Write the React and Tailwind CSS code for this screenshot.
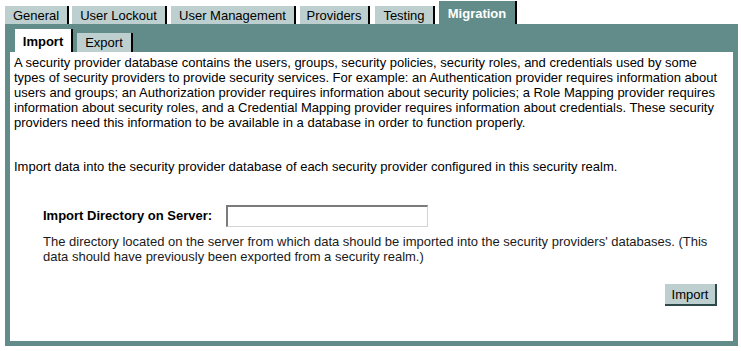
export default function App() {
  const tabs = [
    { label: "General", w: "w-[64px]", ml: "ml-[5px]" },
    { label: "User Lockout", w: "w-[95px]", ml: "ml-[3px]" },
    { label: "User Management", w: "w-[125px]", ml: "ml-[4px]" },
    { label: "Providers", w: "w-[70px]", ml: "ml-[4px]" },
    { label: "Testing", w: "w-[60px]", ml: "ml-[5px]" },
  ];
  return (
    <div className="w-[741px] h-[351px] bg-white text-black font-['Liberation_Sans',Arial,sans-serif] text-[13px] overflow-hidden">
      <div className="flex items-end h-[24px]">
        {tabs.map((t) => (
          <div
            key={t.label}
            className={`${t.w} ${t.ml} h-[18px] bg-[#bdd0cf] border-r-2 border-black flex items-center justify-center leading-none`}
          >
            {t.label}
          </div>
        ))}
        <div className="w-[78px] ml-[4px] h-[23px] bg-[#628c89] border-r-2 border-black flex items-center justify-center text-white font-bold leading-none pt-[1px]">
          Migration
        </div>
      </div>
      <div className="ml-[5px] w-[733px] h-[322px] bg-[#628c89] flex flex-col px-[5px] pb-[5px]">
        <div className="flex items-end h-[28px] pl-[5px]">
          <div className="w-[58px] h-[23px] bg-white border-r-2 border-black flex items-center justify-center font-bold leading-none pt-[1px]">
            Import
          </div>
          <div className="w-[56px] ml-[4px] h-[19px] bg-[#bdd0cf] border-r-2 border-black flex items-center justify-center leading-none">
            Export
          </div>
        </div>
        <div className="flex-1 bg-white pl-[4px] pr-[6px] pt-[3px] flex flex-col">
          <p className="leading-[15px]">
            A security provider database contains the users, groups, security policies, security roles, and credentials used by some types of security providers to provide security services. For example: an Authentication provider requires information about users and groups; an Authorization provider requires information about security policies; a Role Mapping provider requires information about security roles, and a Credential Mapping provider requires information about credentials. These security providers need this information to be available in a database in order to function properly.
          </p>
          <p className="leading-[15px] mt-[29px]">
            Import data into the security provider database of each security provider configured in this security realm.
          </p>
          <div className="flex items-center mt-[31px] ml-[29px]">
            <span className="font-bold w-[183px]">Import Directory on Server:</span>
            <div className="w-[202px] h-[22px] border-t-2 border-l-2 border-[#7b7b7b] border-b border-r border-b-[#d4d4d4] border-r-[#d4d4d4] bg-white"></div>
          </div>
          <p className="leading-[15px] mt-[7px] ml-[29px] pr-[4px] text-[#1a1a1a]">
            The directory located on the server from which data should be imported into the security providers' databases. (This data should have previously been exported from a security realm.)
          </p>
          <div className="flex justify-end mt-[20px] pr-[10px]">
            <div className="w-[52px] h-[22px] bg-[#bdd0cf] border-r-2 border-b-2 border-[#2c4a4a] flex items-center justify-center leading-none">
              Import
            </div>
          </div>
        </div>
      </div>
    </div>
  );
}
